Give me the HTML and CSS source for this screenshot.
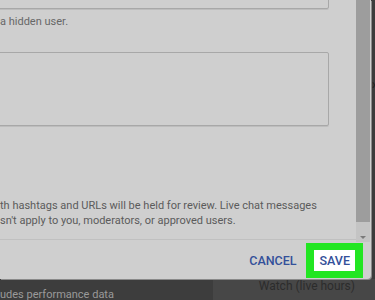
FILE: index.html
```html
<!DOCTYPE html>
<html lang="en">
<head>
  <meta charset="UTF-8" />
  <title>Live chat settings</title>
  <link rel="stylesheet" href="styles.css">
</head>
<body>
  <div class="page">
    <!-- Settings dialog, cut off at the top and left -->
    <div class="dialog">
      <div class="scroll">
        <div class="content">
          <div class="field"></div>
          <p class="hint">a hidden user.</p>
          <div class="textarea"></div>
          <p class="note">th hashtags and URLs will be held for review. Live chat messages<br>sn't apply to you, moderators, or approved users.</p>
          <div class="divider"></div>
        </div>
        <div class="scrollbar">
          <div class="thumb"></div>
          <div class="arrow"></div>
        </div>
      </div>
      <div class="footer">
        <button class="btn">CANCEL</button>
        <div class="highlight">
          <button class="btn btn-save">SAVE</button>
        </div>
      </div>
    </div>

    <!-- Page behind the dialog -->
    <div class="behind">
      <span class="behind-left">udes performance data</span>
      <span class="behind-right">Watch (live hours)</span>
    </div>
    <span class="chevron">›</span>
  </div>
</body>
</html>
```

FILE: styles.css
```css
html, body {
  margin: 0;
  padding: 0;
  height: 100%;
  overflow: hidden;
  font-family: Roboto, "Liberation Sans", Arial, sans-serif;
}

.page {
  position: relative;
  height: 300px;
  background: #3c3c3c;
  display: flex;
  flex-direction: column;
}

.dialog {
  width: 371px;
  background: #cfcfcf;
  border-bottom-right-radius: 4px;
  box-shadow: 1px 1px 0 #8a8a8a;
  display: flex;
  flex-direction: column;
  position: relative;
  z-index: 2;
}

.scroll {
  height: 242px;
  display: flex;
}

.content {
  width: 356px;
  display: flex;
  flex-direction: column;
}

.field {
  margin-top: -22px;
  margin-left: -10px;
  width: 337px;
  height: 29px;
  border: 1px solid #a8a8a8;
  border-radius: 2px;
  box-shadow: 0 1px 0 #bdbdbd;
}

.hint {
  margin: 5px 0 0;
  font-size: 11px;
  line-height: 15px;
  color: #676767;
}

.textarea {
  margin-top: 23px;
  margin-left: -10px;
  width: 337px;
  height: 72px;
  border: 1px solid #a8a8a8;
  border-radius: 2px;
  box-shadow: 0 1px 0 #bdbdbd;
}

.note {
  margin: 72px 0 0;
  font-size: 11px;
  line-height: 15px;
  color: #5b5b5b;
  white-space: nowrap;
}

.divider {
  margin-top: 11px;
  height: 1px;
  background: #c0c0c0;
}

.scrollbar {
  width: 14px;
  display: flex;
  flex-direction: column;
}

.thumb {
  height: 222px;
  background: #9d9d9d;
}

.arrow {
  flex: 1;
  background: #c4c4c4;
  display: flex;
  justify-content: center;
  align-items: flex-end;
  padding-bottom: 3px;
}

.arrow::after {
  content: "";
  border-left: 3px solid transparent;
  border-right: 3px solid transparent;
  border-top: 3px solid #7a7a7a;
}

.footer {
  height: 37px;
  display: flex;
  justify-content: flex-end;
  align-items: center;
  padding-right: 8px;
}

.btn {
  background: none;
  border: none;
  padding: 0;
  font-family: inherit;
  font-size: 12.5px;
  font-weight: 500;
  color: #33509a;
  cursor: pointer;
}

.highlight {
  margin-left: 9px;
  padding: 7px 8px 7px 8px;
  background: #22e622;
}

.btn-save {
  background: #ffffff;
  padding: 3px 5px 3px 6px;
  line-height: 15px;
}

.behind {
  flex: 1;
  display: flex;
  justify-content: space-between;
  align-items: flex-end;
  background: linear-gradient(to right, #3d3d3d 213px, #474747 213px);
  font-size: 11px;
}

.behind-left {
  color: #9a9a9a;
  line-height: 12px;
}

.behind-right {
  color: #2c2c2c;
  font-size: 12px;
  margin-right: 20px;
  margin-bottom: 8px;
}

.chevron {
  position: absolute;
  right: -1px;
  top: 76px;
  font-size: 14px;
  color: #1e1e1e;
}
```
